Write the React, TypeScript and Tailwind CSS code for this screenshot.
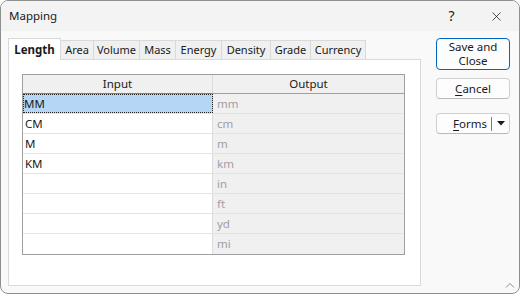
import { X } from "lucide-react";

const tabs = [
  { name: "Length", w: 53 },
  { name: "Area", w: 33 },
  { name: "Volume", w: 46 },
  { name: "Mass", w: 36 },
  { name: "Energy", w: 46 },
  { name: "Density", w: 49 },
  { name: "Grade", w: 40 },
  { name: "Currency", w: 55 },
];

const rows = [
  { input: "MM", output: "mm" },
  { input: "CM", output: "cm" },
  { input: "M", output: "m" },
  { input: "KM", output: "km" },
  { input: "", output: "in" },
  { input: "", output: "ft" },
  { input: "", output: "yd" },
  { input: "", output: "mi" },
];

export default function App() {
  return (
    <div
      className="w-[520px] h-[294px] border border-[#8f8f8f] rounded-[8px] overflow-hidden bg-[#f9f9f9] flex flex-col text-[12px] text-[#1a1a1a] relative"
      style={{ fontFamily: '"Noto Sans", "Open Sans", sans-serif' }}
    >
      {/* title bar */}
      <div className="h-[30px] shrink-0 bg-[#f3f3f3] flex items-center pl-[8px]">
        <span className="text-[11.5px] leading-none">Mapping</span>
        <span className="ml-auto w-[46px] text-center text-[14px] leading-none pl-[3px]">?</span>
        <span className="w-[46px] flex justify-center">
          <X size={15} strokeWidth={1.2} />
        </span>
      </div>

      <div className="flex flex-1">
        {/* tabs + page */}
        <div className="ml-[7px] mt-[7px] flex flex-col">
          <div className="flex items-end h-[21px] text-[11px]">
            {tabs.map((t, i) =>
              i === 0 ? (
                <div
                  key={t.name}
                  style={{ width: t.w }}
                  className="h-[22px] bg-white border border-b-0 border-[#d9d9d9] flex items-center justify-center font-bold relative z-10 -mb-px text-[11.5px]"
                >
                  {t.name}
                </div>
              ) : (
                <div
                  key={t.name}
                  style={{ width: t.w }}
                  className="h-[19px] bg-[#f0f0f0] border border-l-0 border-b-0 border-[#d9d9d9] flex items-center justify-center"
                >
                  {t.name}
                </div>
              )
            )}
          </div>
          <div className="w-[413px] h-[227px] bg-white border border-[#dadada] pt-[14px] pl-[13px]">
            <div className="w-[383px] border border-[#a0a0a0] text-[11.5px]">
              <div className="flex h-[19px] bg-[#f0f0f0] border-b border-[#a0a0a0]">
                <div className="w-[190px] flex items-center justify-center border-r border-[#dcdcdc] relative">
                  Input
                  <div className="absolute left-0 right-0 -bottom-px h-px bg-[#3d8ee0]" />
                </div>
                <div className="flex-1 flex items-center justify-center">Output</div>
              </div>
              {rows.map((r, i) => (
                <div key={r.output} className={`flex h-[20px] ${i < rows.length - 1 ? "border-b border-[#e3e3e3]" : ""}`}>
                  {i === 0 ? (
                    <div className="w-[190px] flex items-center pl-[1px] bg-[#b5d6f4] outline outline-1 outline-dotted outline-[#222] -outline-offset-1">
                      {r.input}
                    </div>
                  ) : (
                    <div className="w-[190px] flex items-center pl-[2px] border-r border-[#dcdcdc] bg-white">{r.input}</div>
                  )}
                  <div className="flex-1 flex items-center pl-[4px] bg-[#f0f0f0] text-[#a39ca5]">{r.output}</div>
                </div>
              ))}
            </div>
          </div>
        </div>

        {/* buttons */}
        <div className="ml-[15px] mt-[7px] w-[74px] flex flex-col text-[11.5px]">
          <button className="h-[32px] border border-[#0067c0] rounded-[4px] bg-[#fdfdfd] leading-[14px]">
            Save and
            <br />
            Close
          </button>
          <button className="mt-[8px] h-[21px] border border-[#d0d0d0] border-b-[#b8b8b8] rounded-[4px] bg-[#fdfdfd] leading-none">
            <span className="underline underline-offset-2">C</span>ancel
          </button>
          <div className="mt-[14px] h-[21px] border border-[#d0d0d0] border-b-[#b8b8b8] rounded-[4px] bg-[#fdfdfd] flex items-center">
            <span className="flex-1 text-right pr-[4px]">
              <span className="underline underline-offset-2">F</span>orms
            </span>
            <span className="w-px h-[14px] bg-[#7a7a7a]" />
            <span className="w-[17px] flex justify-center">
              <svg width="8" height="5" viewBox="0 0 8 5">
                <path d="M0 0 L8 0 L4 4.5 Z" fill="#1a1a1a" />
              </svg>
            </span>
          </div>
        </div>
      </div>

      {/* size grip */}
      <svg className="absolute right-[4px] bottom-[5px]" width="10" height="6" viewBox="0 0 10 6">
        <path d="M1 5.5 L5 1.5 L9 5.5" stroke="#8a8a8a" strokeWidth="1" fill="none" />
      </svg>
    </div>
  );
}
